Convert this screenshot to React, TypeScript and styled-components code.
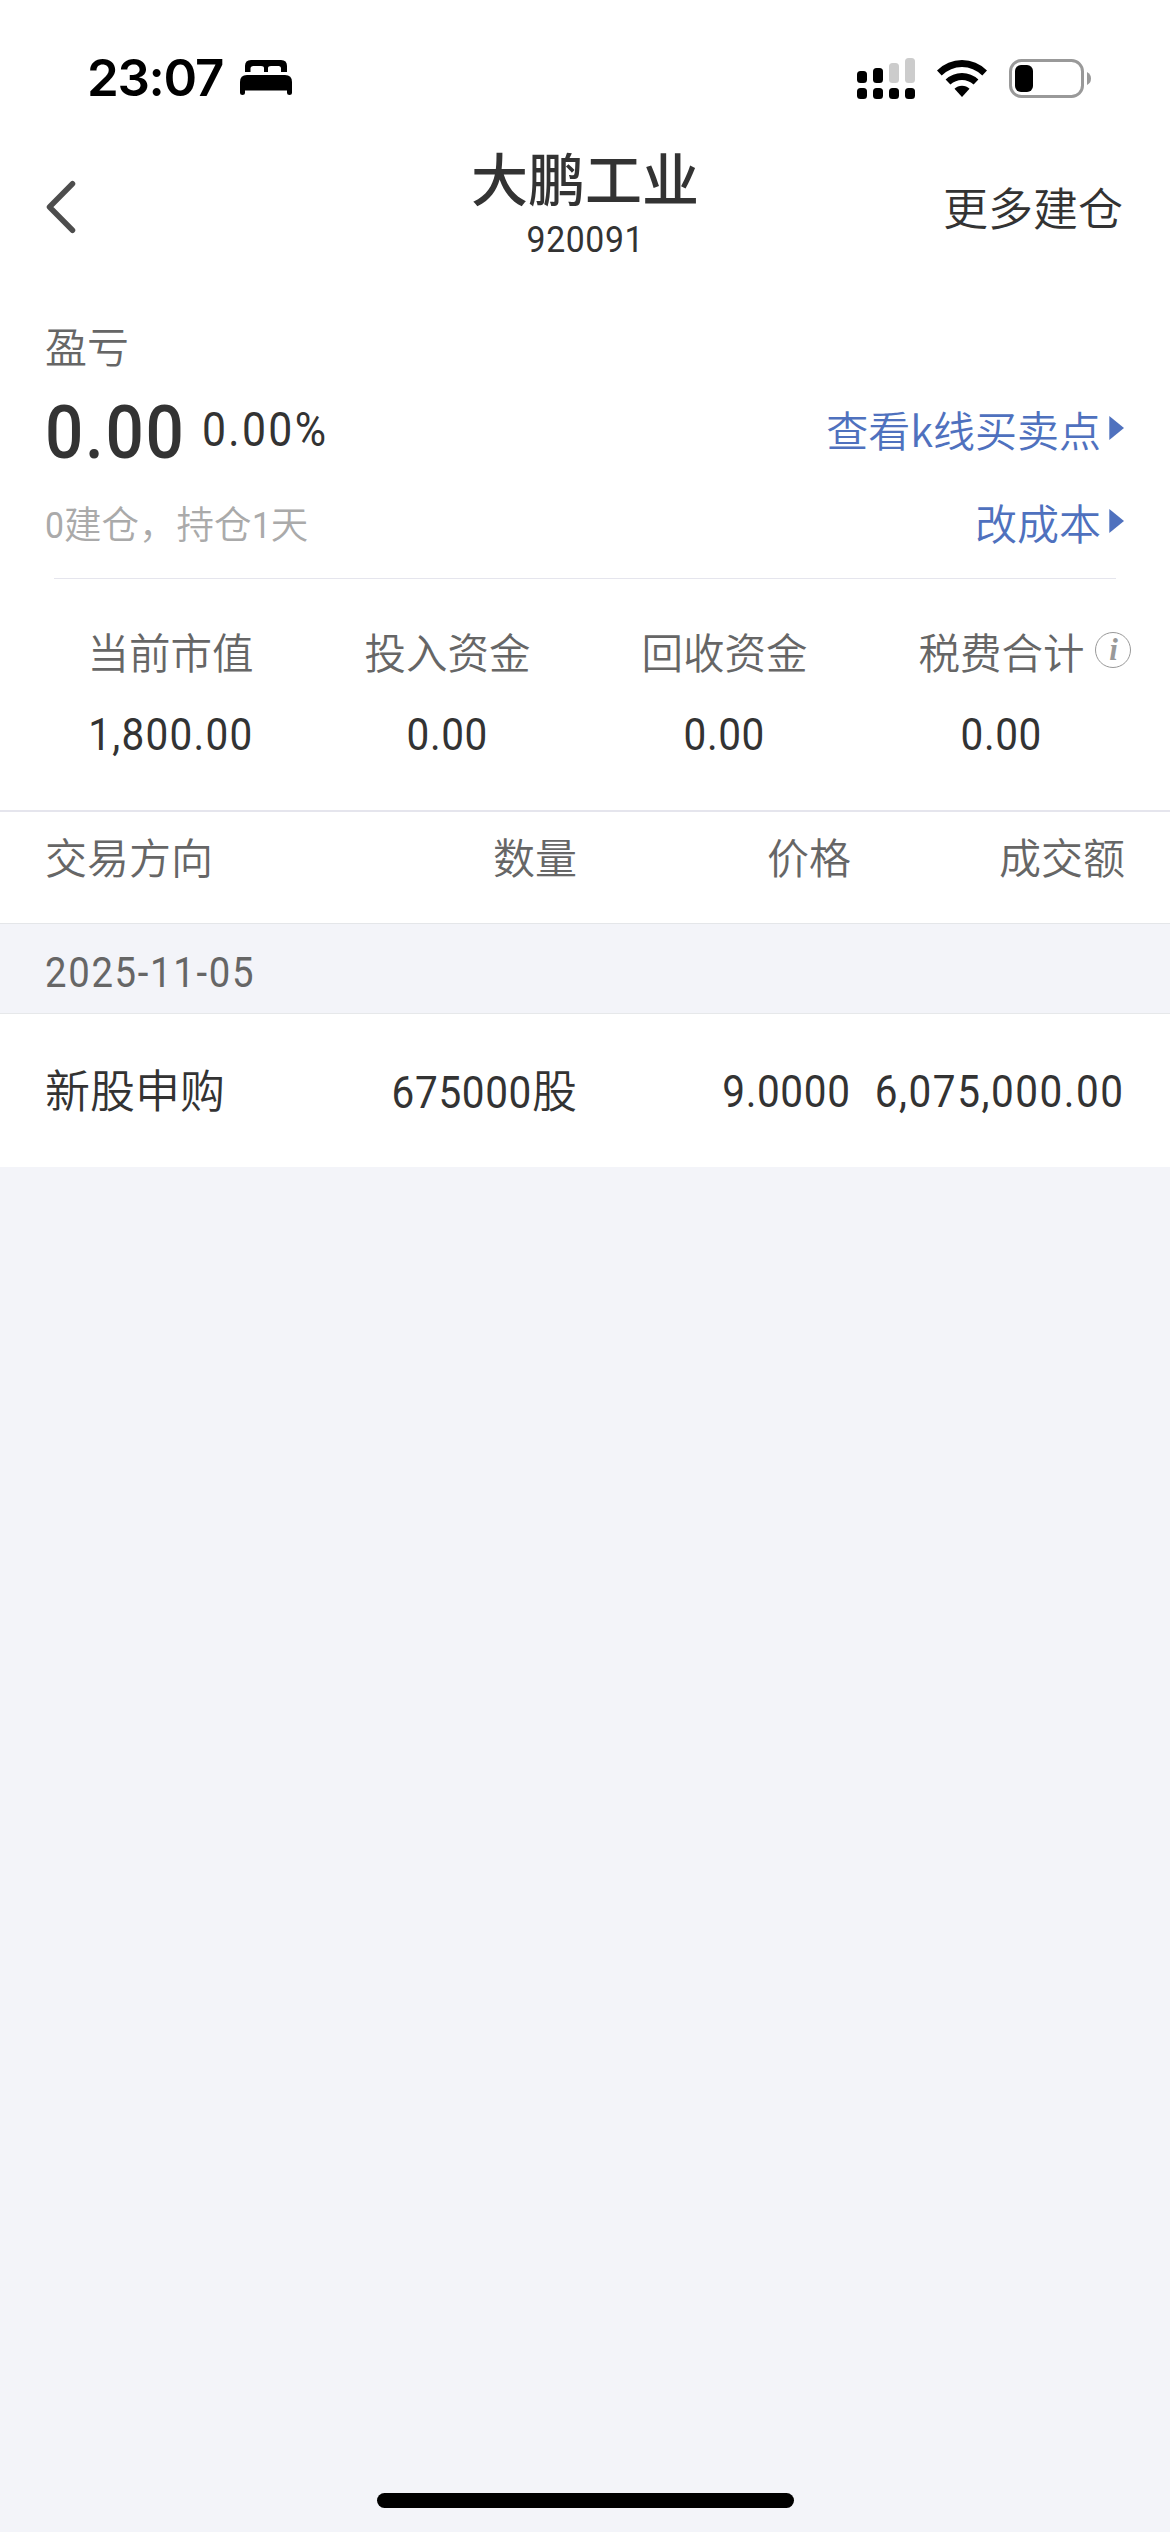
import React from "react";
import styled, { createGlobalStyle } from "styled-components";

const cjk = `"Noto Sans CJK SC", sans-serif`;
const din = `Roboto, "Noto Sans CJK SC", sans-serif`;

const GlobalStyle = createGlobalStyle`
  * { box-sizing: border-box; }
  body { margin: 0; background: #f3f4f9; }
`;

const Screen = styled.div`
  width: 1170px;
  height: 2532px;
  display: flex;
  flex-direction: column;
  background: #f3f4f9;
  color: #333;
  font-family: ${cjk};
  font-weight: 350;
  white-space: nowrap;
  overflow: hidden;
`;

const StatusBar = styled.header`
  height: 141px;
  padding: 16px 78px 0 87px;
  background: #fff;
  display: flex;
  justify-content: space-between;
`;

const StatusGroup = styled.div<{ $gap: number }>`
  height: 124px;
  display: flex;
  align-items: center;
  gap: ${(p) => p.$gap}px;
`;

const Clock = styled.span`
  font: 600 51px/62px Inter, sans-serif;
  color: #000;
  letter-spacing: -1.3px;
`;

const Icon = styled.svg`
  display: block;
  flex: none;
`;

const NavBar = styled.nav`
  height: 143px;
  padding: 0 45px;
  background: #fff;
  display: grid;
  grid-template-columns: 1fr auto 1fr;
  align-items: start;
`;

const BackButton = styled.button`
  width: 34px;
  height: 56px;
  margin-top: 38px;
  padding: 0;
  border: 0;
  background: none;
`;

const TitleBlock = styled.div`
  display: flex;
  flex-direction: column;
  align-items: center;
`;

const Title = styled.h1`
  margin: 1px 0 7px;
  font-size: 57px;
  line-height: 68px;
  font-weight: 500;
`;

const NavAction = styled.a`
  justify-self: end;
  margin: 33px 2px 0 0;
  font-size: 45px;
  line-height: 66px;
`;

/* Figures are set slightly condensed, scaled from the edge they align to. */
const Num = styled.span<{ $size: number; $weight?: number; $spacing?: number; $origin?: string }>`
  display: inline-block;
  font-family: ${din};
  font-size: ${(p) => p.$size}px;
  font-weight: ${(p) => p.$weight ?? 400};
  line-height: 1.2;
  letter-spacing: ${(p) => p.$spacing ?? 0.7}px;
  transform: scaleX(0.9);
  transform-origin: ${(p) => p.$origin ?? "left"} center;
`;

const Summary = styled.section`
  height: 294px;
  padding: 30px 45px 0;
  background: #fff;
`;

const Label = styled.div`
  font-size: 42px;
  line-height: 62px;
  color: #666;
`;

const SummaryRow = styled.div<{ $height: number }>`
  height: ${(p) => p.$height}px;
  display: flex;
  align-items: center;
  justify-content: space-between;
`;

const Profit = styled.div`
  padding-top: 6px;
  display: flex;
  align-items: center;
`;

const Percent = styled(Num)`
  margin: -4px 0 0 1px;
`;

const Note = styled.div`
  font-size: 37.5px;
  line-height: 54px;
  color: #aaa;
`;

const NoteNum = styled(Num)`
  margin-right: -2px;
`;

const Link = styled.a`
  display: flex;
  align-items: center;
  gap: 8px;
  font-size: 42px;
  line-height: 60px;
  color: #4f71be;
`;

const Divider = styled.hr`
  height: 1px;
  margin: 0 54px;
  border: 0;
  background: #e5e5ed;
`;

const Stats = styled.section`
  height: 233px;
  padding: 42px 30px 0 32px;
  background: #fff;
  border-bottom: 2px solid #e5e5ed;
  display: grid;
  grid-template-columns: repeat(4, 277px);
`;

const SummaryPanel = styled.div`
  background: #fff;
`;

const Stat = styled.div`
  display: flex;
  flex-direction: column;
  align-items: center;
  gap: 27px;
`;

const StatLabel = styled(Label)`
  position: relative;
  font-size: 41.5px;
  line-height: 60px;
`;

const InfoBadge = styled.span`
  position: absolute;
  left: 177px;
  top: 11px;
  width: 36px;
  height: 36px;
  border: 1.5px solid #999;
  border-radius: 50%;
  display: flex;
  align-items: center;
  justify-content: center;
  font: italic 700 31px/32px "Liberation Serif", serif;
  color: #999;
`;

const Row = styled.div<{ $height: number; $size: number; $color: string; $lift: number }>`
  height: ${(p) => p.$height}px;
  padding: 0 45px ${(p) => p.$lift}px;
  background: #fff;
  display: grid;
  grid-template-columns: 260px 272px 274px 274px;
  align-items: center;
  font-size: ${(p) => p.$size}px;
  line-height: 66px;
  color: ${(p) => p.$color};
`;

const Cell = styled.div`
  display: flex;
  align-items: baseline;
  justify-content: flex-end;
  &:first-child { justify-content: flex-start; }
`;

const FigureCell = styled(Cell)`
  padding-top: 5px;
`;

const DateBand = styled.div`
  height: 91px;
  padding: 8px 45px 0;
  border-top: 1px solid #e4e6e9;
  border-bottom: 1px solid #e6e8ea;
  display: flex;
  align-items: center;
  color: #666;
`;

const HomeIndicator = styled.div`
  width: 417px;
  height: 15px;
  margin: auto auto 24px;
  border-radius: 8px;
  background: #000;
`;

const Arrow = () => (
  <Icon width="16" height="26" viewBox="0 0 16 26">
    <path d="M0.3 0L15 12L0.3 24z" fill="#4f71be" />
  </Icon>
);

const Bed = () => (
  <Icon width="52" height="36" viewBox="0 0 52 36">
    <path d="M5 12V6Q5 0 11 0H41Q47 0 47 6V12H41V8.500Q41 6 38.500 6H31Q28 6 28 8V12H24V8Q24 6 21 6H13.500Q10.500 6 10.500 8.500V12z" />
    <path d="M0 22Q0 15 7 15H45Q52 15 52 22V33Q52 35 49.500 35Q47 35 47 33V30.500H5V33Q5 35 2.500 35Q0 35 0 33z" />
  </Icon>
);

const bars = [
  { y: 13, h: 12, c: "#000" },
  { y: 10, h: 15, c: "#000" },
  { y: 5, h: 20, c: "#ccc" },
  { y: 0, h: 25, c: "#ccc" },
];

const Signal = () => (
  <Icon width="58" height="41" viewBox="0 0 58 41">
    {bars.map((b, i) => (
      <g key={i}>
        <rect x={i * 16} y={b.y} width="10" height={b.h} rx="3.500" fill={b.c} />
        <rect x={i * 16} y="30" width="10" height="11" rx="3.500" />
      </g>
    ))}
  </Icon>
);

const Wifi = () => (
  <Icon width="50" height="37" viewBox="0 0 50 37">
    <path d="M0 10.600Q10.500 0 25 0T50 10.600L45.300 15.600Q36.500 7 25 7T4.700 15.600z" />
    <path d="M8.600 19.600Q15.500 13 25 13T41.400 19.600L36.600 24.600Q31.500 20 25 20T13.400 24.600z" />
    <path d="M17.500 28.800Q20.500 25.800 25 25.800T32.500 28.800L25 37z" />
  </Icon>
);

const Battery = () => (
  <Icon width="83" height="39" viewBox="0 0 83 39">
    <rect x="1.500" y="1.500" width="72" height="36" rx="11" fill="none" stroke="#999" strokeWidth="3" />
    <rect x="6" y="6" width="18" height="27" rx="6" />
    <path d="M78 13Q82 15 82 19.500T78 26z" fill="#999" />
  </Icon>
);

const stats = [
  { label: "当前市值", value: "1,800.00", spacing: 1.4 },
  { label: "投入资金", value: "0.00" },
  { label: "回收资金", value: "0.00" },
  { label: "税费合计", value: "0.00", info: true },
];

export default function App() {
  return (
    <Screen>
      <GlobalStyle />
      <StatusBar>
        <StatusGroup $gap={17}>
          <Clock>23:07</Clock>
          <Bed />
        </StatusGroup>
        <StatusGroup $gap={22}>
          <Signal />
          <Wifi />
          <Battery />
        </StatusGroup>
      </StatusBar>
      <NavBar>
        <BackButton aria-label="返回">
          <Icon width="34" height="56" viewBox="0 0 34 56">
            <path d="M27.500 4.700L4.500 28L27.500 51.300" fill="none" stroke="#4d4d4d" strokeWidth="5.500" strokeLinecap="round" strokeLinejoin="round" />
          </Icon>
        </BackButton>
        <TitleBlock>
          <Title>大鹏工业</Title>
          <Num $size={37.5} $origin="center">920091</Num>
        </TitleBlock>
        <NavAction>更多建仓</NavAction>
      </NavBar>
      <SummaryPanel>
        <Summary>
          <Label>盈亏</Label>
          <SummaryRow $height={106}>
            <Profit>
              <Num $size={75} $weight={500} $spacing={1.9}>0.00</Num>
              <Percent $size={47.5} $spacing={2.6}>0.00%</Percent>
            </Profit>
            <Link>查看k线买卖点<Arrow /></Link>
          </SummaryRow>
          <SummaryRow $height={80}>
            <Note><NoteNum $size={37.5} $spacing={0}>0</NoteNum>建仓，持仓<NoteNum $size={37.5} $spacing={0}>1</NoteNum>天</Note>
            <Link>改成本<Arrow /></Link>
          </SummaryRow>
        </Summary>
        <Divider />
      </SummaryPanel>
      <Stats>
        {stats.map((s) => (
          <Stat key={s.label}>
            <StatLabel>
              {s.label}
              {s.info && <InfoBadge>i</InfoBadge>}
            </StatLabel>
            <Num $size={45} $origin="center" $spacing={s.spacing}>{s.value}</Num>
          </Stat>
        ))}
      </Stats>
      <Row $height={111} $size={42} $color="#666" $lift={24}>
        <Cell>交易方向</Cell>
        <Cell>数量</Cell>
        <Cell>价格</Cell>
        <Cell>成交额</Cell>
      </Row>
      <DateBand>
        <Num $size={42.5} $spacing={1.9}>2025-11-05</Num>
      </DateBand>
      <Row $height={153} $size={45} $color="#333" $lift={3}>
        <Cell>新股申购</Cell>
        <Cell><Num $size={45} $origin="right">675000</Num>股</Cell>
        <FigureCell><Num $size={45} $origin="right">9.0000</Num></FigureCell>
        <FigureCell><Num $size={45} $origin="right" $spacing={1.7}>6,075,000.00</Num></FigureCell>
      </Row>
      <HomeIndicator />
    </Screen>
  );
}
